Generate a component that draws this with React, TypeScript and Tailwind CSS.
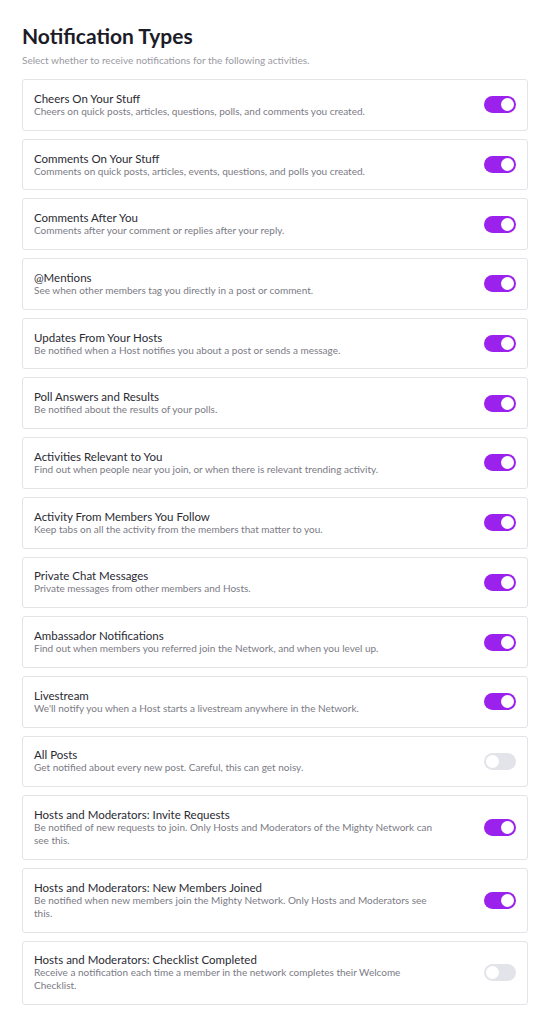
import React from "react";

type Item = { title: string; description: string; on: boolean };

const items: Item[] = [
  { title: "Cheers On Your Stuff", description: "Cheers on quick posts, articles, questions, polls, and comments you created.", on: true },
  { title: "Comments On Your Stuff", description: "Comments on quick posts, articles, events, questions, and polls you created.", on: true },
  { title: "Comments After You", description: "Comments after your comment or replies after your reply.", on: true },
  { title: "@Mentions", description: "See when other members tag you directly in a post or comment.", on: true },
  { title: "Updates From Your Hosts", description: "Be notified when a Host notifies you about a post or sends a message.", on: true },
  { title: "Poll Answers and Results", description: "Be notified about the results of your polls.", on: true },
  { title: "Activities Relevant to You", description: "Find out when people near you join, or when there is relevant trending activity.", on: true },
  { title: "Activity From Members You Follow", description: "Keep tabs on all the activity from the members that matter to you.", on: true },
  { title: "Private Chat Messages", description: "Private messages from other members and Hosts.", on: true },
  { title: "Ambassador Notifications", description: "Find out when members you referred join the Network, and when you level up.", on: true },
  { title: "Livestream", description: "We'll notify you when a Host starts a livestream anywhere in the Network.", on: true },
  { title: "All Posts", description: "Get notified about every new post. Careful, this can get noisy.", on: false },
  { title: "Hosts and Moderators: Invite Requests", description: "Be notified of new requests to join. Only Hosts and Moderators of the Mighty Network can see this.", on: true },
  { title: "Hosts and Moderators: New Members Joined", description: "Be notified when new members join the Mighty Network. Only Hosts and Moderators see this.", on: true },
  { title: "Hosts and Moderators: Checklist Completed", description: "Receive a notification each time a member in the network completes their Welcome Checklist.", on: false },
];

const Toggle: React.FC<{ on: boolean }> = ({ on }) => (
  <div
    className={
      on
        ? "flex items-center justify-end w-[32px] h-[17px] rounded-full bg-[#9b22ec] px-[2px] shrink-0"
        : "flex items-center justify-start w-[32px] h-[17px] rounded-full bg-[#e3e4e9] px-[2px] shrink-0"
    }
  >
    <div className="w-[13px] h-[13px] rounded-full bg-white" />
  </div>
);

const App: React.FC = () => {
  return (
    <div className="min-h-screen bg-white font-['Lato',sans-serif] px-[22px] pt-[24px] pb-6">
      <h1 className="text-[21px] leading-[24px] font-bold text-[#1c1c28]">Notification Types</h1>
      <p className="mt-[6px] text-[10px] leading-[12px] text-[#9a9aa2]">
        Select whether to receive notifications for the following activities.
      </p>
      <div className="flex flex-col gap-[8px] mt-[13px] w-[506px]">
        {items.map((item, index) => (
          <div
            key={index}
            className="flex items-center gap-[44px] border border-[#e3e4e8] rounded-[3px] pl-[11px] pr-[11px] py-[11.85px]"
          >
            <div className="flex flex-col flex-1">
              <div className="text-[11.5px] leading-[13px] text-[#2a2a33]">{item.title}</div>
              <div className="text-[10px] leading-[13px] text-[#7b7b85]">{item.description}</div>
            </div>
            <Toggle on={item.on} />
          </div>
        ))}
      </div>
    </div>
  );
};

export default App;
